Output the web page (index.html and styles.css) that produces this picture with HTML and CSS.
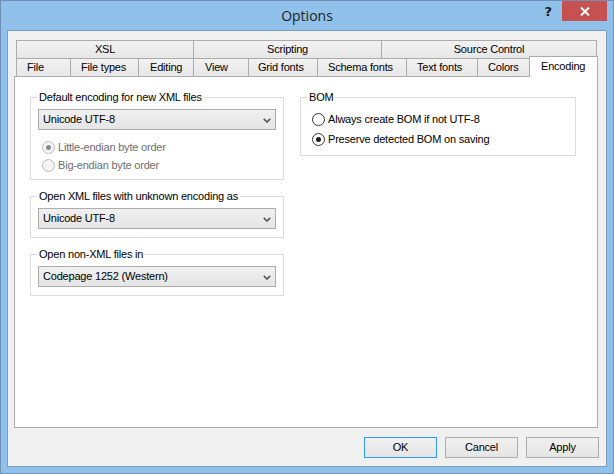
FILE: index.html
```html
<!DOCTYPE html>
<html>
<head>
<meta charset="utf-8">
<link rel="stylesheet" href="styles.css">
</head>
<body>
<div class="window">
  <div class="titlebar">
    <div class="tb-spacer"></div>
    <div class="title">Options</div>
    <div class="tb-controls">
      <span class="help">?</span>
      <span class="close"><svg width="10" height="9" viewBox="0 0 10 9"><path d="M1 0.5 L9 8.5 M9 0.5 L1 8.5" stroke="#fff" stroke-width="2" fill="none"/></svg></span>
    </div>
  </div>
  <div class="client">
    <div class="tabs">
      <div class="tab-row">
        <div class="tab center w-xsl">XSL</div>
        <div class="tab center w-scripting">Scripting</div>
        <div class="tab center w-source">Source Control</div>
      </div>
      <div class="tab-row">
        <div class="tab w-file">File</div>
        <div class="tab w-filetypes">File types</div>
        <div class="tab w-editing">Editing</div>
        <div class="tab w-view">View</div>
        <div class="tab w-grid">Grid fonts</div>
        <div class="tab w-schema">Schema fonts</div>
        <div class="tab w-text">Text fonts</div>
        <div class="tab w-colors">Colors</div>
        <div class="tab selected w-encoding">Encoding</div>
      </div>
    </div>
    <div class="panel">
      <div class="col-left">
        <div class="group g1">
          <div class="group-title">Default encoding for new XML files</div>
          <div class="combo"><span>Unicode UTF-8</span><svg class="chev" width="8" height="5" viewBox="0 0 8 5"><path d="M0.8 0.8 L4 4 L7.2 0.8" stroke="#5a5a5a" stroke-width="1.7" fill="none"/></svg></div>
          <div class="radios first">
            <div class="radio disabled"><span class="circle"><span class="dot"></span></span><span>Little-endian byte order</span></div>
            <div class="radio disabled"><span class="circle"></span><span>Big-endian byte order</span></div>
          </div>
        </div>
        <div class="group g2">
          <div class="group-title">Open XML files with unknown encoding as</div>
          <div class="combo"><span>Unicode UTF-8</span><svg class="chev" width="8" height="5" viewBox="0 0 8 5"><path d="M0.8 0.8 L4 4 L7.2 0.8" stroke="#5a5a5a" stroke-width="1.7" fill="none"/></svg></div>
        </div>
        <div class="group g3">
          <div class="group-title">Open non-XML files in</div>
          <div class="combo"><span>Codepage 1252 (Western)</span><svg class="chev" width="8" height="5" viewBox="0 0 8 5"><path d="M0.8 0.8 L4 4 L7.2 0.8" stroke="#5a5a5a" stroke-width="1.7" fill="none"/></svg></div>
        </div>
      </div>
      <div class="group bom">
        <div class="group-title">BOM</div>
        <div class="radios bom-radios">
          <div class="radio"><span class="circle"></span><span>Always create BOM if not UTF-8</span></div>
          <div class="radio"><span class="circle"><span class="dot"></span></span><span>Preserve detected BOM on saving</span></div>
        </div>
      </div>
    </div>
    <div class="buttons">
      <div class="btn default">OK</div>
      <div class="btn">Cancel</div>
      <div class="btn">Apply</div>
    </div>
  </div>
</div>
</body>
</html>
```
FILE: styles.css
```css
html, body {
  margin: 0;
  padding: 0;
  background: #8fc1eb;
}
.window {
  width: 614px;
  height: 474px;
  box-sizing: border-box;
  border: 1px solid #6f8fb6;
  background: #8fc1eb;
  font-family: "Liberation Sans", Arial, sans-serif;
  font-size: 11px;
  letter-spacing: -0.2px;
  color: #000;
  display: flex;
  flex-direction: column;
}
.titlebar {
  height: 29px;
  display: grid;
  grid-template-columns: 1fr auto 1fr;
}
.title {
  font-family: "Open Sans", "Noto Sans", sans-serif;
  font-size: 14px;
  letter-spacing: 0;
  color: #1e1e1e;
  line-height: 30px;
}
.tb-controls {
  display: flex;
  justify-content: flex-end;
  align-items: flex-start;
}
.help {
  font-family: "DejaVu Sans", sans-serif;
  font-weight: bold;
  font-size: 13px;
  letter-spacing: 0;
  color: #1a1a1a;
  line-height: 20px;
  margin-top: 1px;
  margin-right: 10px;
}
.close {
  width: 45px;
  height: 20px;
  background: #c75050;
  margin-right: 6px;
  display: flex;
  align-items: center;
  justify-content: center;
}
.client {
  flex: 1;
  margin: 0 6px 6px 6px;
  border: 1px solid #7d9cc0;
  background: #f0f0f0;
  padding-top: 9px;
  display: flex;
  flex-direction: column;
}
.tabs {
  margin-left: 8px;
}
.tab-row {
  display: flex;
  height: 18px;
}
.tab {
  box-sizing: border-box;
  height: 19px;
  border: 1px solid #acacac;
  border-bottom: none;
  background: linear-gradient(#f2f2f2, #e6e6e6);
  margin-right: -1px;
  padding-left: 10px;
  line-height: 17px;
  white-space: nowrap;
}
.tab.center {
  text-align: center;
  padding-left: 0;
}
.tab.selected {
  position: relative;
  z-index: 2;
  background: #fff;
  height: 21px;
  margin-top: -2px;
  padding-left: 11px;
  line-height: 18px;
}
.w-xsl { width: 178px; }
.w-scripting { width: 189px; }
.w-source { width: 216px; }
.w-file { width: 55px; }
.w-filetypes { width: 69px; }
.w-editing { width: 56px; padding-left: 11px; }
.w-view { width: 56px; padding-left: 11px; }
.w-grid { width: 70px; padding-left: 9px; }
.w-schema { width: 90px; }
.w-text { width: 72px; }
.w-colors { width: 53px; }
.w-encoding { width: 69px; }
.panel {
  margin-left: 6px;
  width: 584px;
  height: 352px;
  box-sizing: border-box;
  border: 1px solid #acacac;
  background: #fff;
  padding: 20px 0 0 15px;
  display: flex;
  align-items: flex-start;
  gap: 16px;
}
.col-left {
  width: 254px;
  display: flex;
  flex-direction: column;
  gap: 16px;
}
.group {
  border: 1px solid #dcdcdc;
  padding: 0 7px 8px 7px;
}
.group.g1 {
  padding-bottom: 5px;
}
.group.bom {
  width: 276px;
  box-sizing: border-box;
  padding-bottom: 6px;
}
.group-title {
  width: fit-content;
  margin: -7px 0 0 -1px;
  padding: 0 2px;
  background: #fff;
  line-height: 13px;
  white-space: nowrap;
}
.combo {
  margin-top: 5px;
  height: 21px;
  box-sizing: border-box;
  border: 1px solid #acacac;
  background: linear-gradient(#f0f0f0, #e5e5e5);
  padding: 0 4px 0 4px;
  display: flex;
  justify-content: space-between;
  align-items: center;
  line-height: 19px;
}
.chev {
  margin-top: 2px;
}
.radios {
  display: flex;
  flex-direction: column;
}
.radios.first {
  margin-top: 8px;
}
.radio {
  height: 18px;
  display: flex;
  align-items: center;
  gap: 3px;
  margin-left: 4px;
  white-space: nowrap;
}
.bom-radios {
  margin-top: 5px;
}
.bom-radios .radio {
  height: 20px;
}
.circle {
  width: 13px;
  height: 13px;
  box-sizing: border-box;
  border: 1px solid #333;
  border-radius: 50%;
  background: #fff;
  display: flex;
  align-items: center;
  justify-content: center;
  flex: none;
}
.dot {
  width: 5px;
  height: 5px;
  border-radius: 50%;
  background: #1c1c1c;
}
.radio.disabled {
  color: #6d6d6d;
}
.radio.disabled .circle {
  border-color: #bcbcbc;
  background: #f4f4f4;
}
.radio.disabled .dot {
  background: #8a8a8a;
}
.buttons {
  margin-top: 9px;
  margin-right: 7px;
  display: flex;
  justify-content: flex-end;
  gap: 8px;
}
.btn {
  width: 73px;
  height: 21px;
  box-sizing: border-box;
  border: 1px solid #adadad;
  background: linear-gradient(#f0f0f0, #e5e5e5);
  text-align: center;
  line-height: 19px;
}
.btn.default {
  border-color: #3399ff;
}
```
